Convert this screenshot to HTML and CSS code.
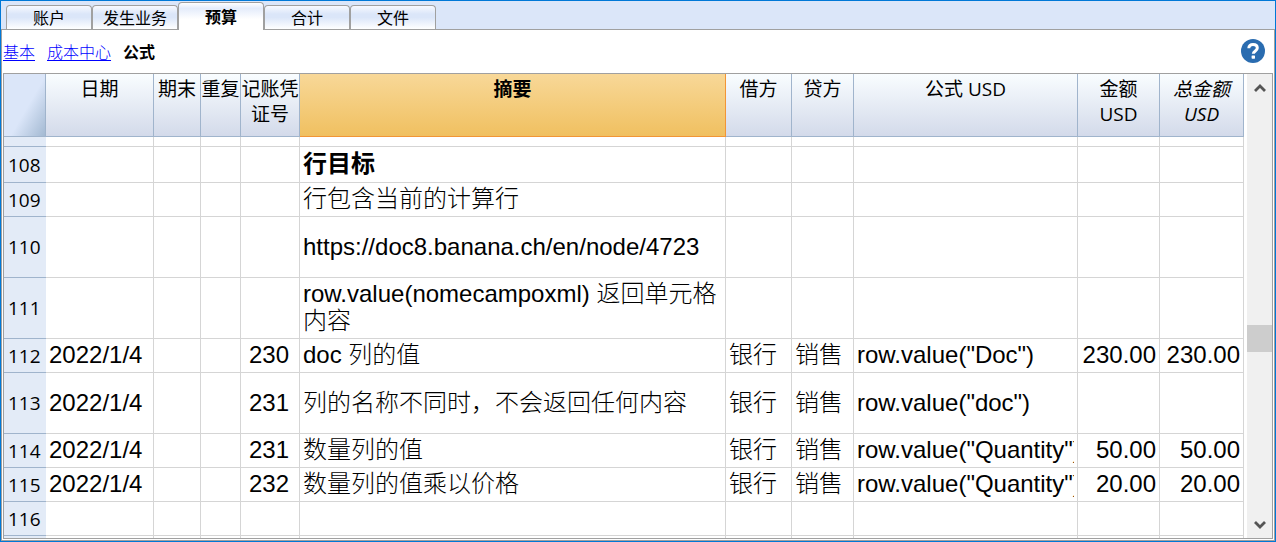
FILE: index.html
```html
<!DOCTYPE html>
<html lang="zh-CN">
<head>
<meta charset="utf-8">
<title>预算</title>
<link rel="stylesheet" href="styles.css">
</head>
<body>
<div class="window">
  <nav class="tabs">
    <button class="tab" type="button">账户</button>
    <button class="tab" type="button">发生业务</button>
    <button class="tab active" type="button">预算</button>
    <button class="tab" type="button">合计</button>
    <button class="tab" type="button">文件</button>
  </nav>
  <div class="panel">
    <div class="views">
      <a href="#base">基本</a>
      <a href="#cost">成本中心</a>
      <span class="current">公式</span>
      <button class="help" type="button" aria-label="帮助">
        <svg width="24" height="24" viewBox="0 0 24 24"><circle cx="12" cy="12" r="12" fill="#2a6cb0"/><path d="M7.800 9.200C7.800 6.800 9.500 5.600 12 5.600s4.300 1.300 4.300 3.500c0 2.900-4 2.700-4 5.700" fill="none" stroke="#fff" stroke-width="3"/><rect x="10.600" y="16.500" width="3.400" height="3.200" rx=".6" fill="#fff"/></svg>
      </button>
    </div>
    <div class="sheet">
      <div class="grid">
        <table>
          <colgroup>
            <col class="w-num"><col class="w-date"><col class="w-end"><col class="w-rep"><col class="w-doc"><col><col class="w-debit"><col class="w-credit"><col class="w-formula"><col class="w-amount"><col class="w-total">
          </colgroup>
          <thead>
            <tr><th class="corner"></th><th>日期</th><th>期末</th><th>重复</th><th>记账凭证号</th><th class="selected">摘要</th><th>借方</th><th>贷方</th><th>公式 USD</th><th>金额<br>USD</th><th class="italic">总金额<br>USD</th></tr>
          </thead>
          <tbody>
            <tr class="partial"><th></th><td></td><td></td><td></td><td></td><td></td><td></td><td></td><td></td><td></td><td></td></tr>
            <tr class="title"><th>108</th><td></td><td></td><td></td><td></td><td>行目标</td><td></td><td></td><td></td><td></td><td></td></tr>
            <tr><th>109</th><td></td><td></td><td></td><td></td><td>行包含当前的计算行</td><td></td><td></td><td></td><td></td><td></td></tr>
            <tr class="tall"><th>110</th><td></td><td></td><td></td><td></td><td>https://doc8.banana.ch/en/node/4723</td><td></td><td></td><td></td><td></td><td></td></tr>
            <tr class="tall"><th>111</th><td></td><td></td><td></td><td></td><td>row.value(nomecampoxml) 返回单元格内容</td><td></td><td></td><td></td><td></td><td></td></tr>
            <tr><th>112</th><td>2022/1/4</td><td></td><td></td><td class="doc">230</td><td>doc 列的值</td><td>银行</td><td>销售</td><td><div class="formula">row.value("Doc")</div></td><td class="num">230.00</td><td class="num">230.00</td></tr>
            <tr class="tall"><th>113</th><td>2022/1/4</td><td></td><td></td><td class="doc">231</td><td>列的名称不同时，不会返回任何内容</td><td>银行</td><td>销售</td><td><div class="formula">row.value("doc")</div></td><td></td><td></td></tr>
            <tr><th>114</th><td>2022/1/4</td><td></td><td></td><td class="doc">231</td><td>数量列的值</td><td>银行</td><td>销售</td><td><div class="formula">row.value("Quantity")</div></td><td class="num">50.00</td><td class="num">50.00</td></tr>
            <tr><th>115</th><td>2022/1/4</td><td></td><td></td><td class="doc">232</td><td>数量列的值乘以价格</td><td>银行</td><td>销售</td><td><div class="formula">row.value("Quantity")</div></td><td class="num">20.00</td><td class="num">20.00</td></tr>
            <tr><th>116</th><td></td><td></td><td></td><td></td><td></td><td></td><td></td><td></td><td></td><td></td></tr>
            <tr><th></th><td></td><td></td><td></td><td></td><td></td><td></td><td></td><td></td><td></td><td></td></tr>
          </tbody>
        </table>
      </div>
      <div class="scrollbar">
        <button type="button" aria-label="向上滚动"><svg width="12" height="10" viewBox="0 0 12 10"><path d="M1 8l5-5 5 5" fill="none" stroke="#555" stroke-width="2.800"/></svg></button>
        <div class="track"><div class="thumb"></div></div>
        <button type="button" aria-label="向下滚动"><svg width="12" height="10" viewBox="0 0 12 10"><path d="M1 2l5 5 5-5" fill="none" stroke="#555" stroke-width="2.800"/></svg></button>
      </div>
    </div>
  </div>
</div>
</body>
</html>
```
FILE: styles.css
```css
* { box-sizing: border-box; }
body {
  margin: 0;
  color: #000;
  font: 16px/20px "Noto Sans CJK SC", sans-serif;
}
button { font: inherit; color: inherit; border: 0; padding: 0; background: none; }
svg { display: block; }

.window {
  display: flex;
  flex-direction: column;
  height: 100vh;
  border: 1px solid #0078d7;
  background: #dbe6f9;
}
.tabs {
  display: flex;
  align-items: flex-end;
  flex: none;
  height: 28px;
  padding-left: 5px;
}
.tab {
  width: 86px;
  height: 24px;
  padding-bottom: 2px;
  border: 1px solid #a0a0a0;
  border-bottom: 0;
  border-radius: 4px 4px 0 0;
  background: linear-gradient(#f8faff, #dbe6f9 35%, #dbe6f9 50%, #fff);
}
.tab.active {
  position: relative;
  height: 28px;
  margin-bottom: -1px;
  font-weight: 700;
  background: linear-gradient(#fff, #e4ecfb 20%, #fff 60%);
}
.panel {
  flex: 1;
  min-height: 0;
  display: flex;
  flex-direction: column;
  padding: 0 1px 1px;
  border: 1px solid #a0a0a0;
  background: #fff;
}

.views {
  display: flex;
  align-items: center;
  gap: 12px;
  flex: none;
  height: 43px;
  padding-bottom: 2px;
}
.views a { color: #00f; font-weight: 300; text-underline-offset: 2px; }
.current { font-weight: 700; }
.help { margin-left: auto; margin-right: 8px; }

.sheet {
  flex: 1;
  min-height: 0;
  display: flex;
  border: 1px solid #a0a0a0;
}
.grid { flex: 1; min-width: 0; overflow: hidden; }
table {
  width: 100%;
  table-layout: fixed;
  border-collapse: separate;
  border-spacing: 0;
}
.w-num { width: 42px; }
.w-date { width: 108px; }
.w-end { width: 47px; }
.w-rep { width: 40px; }
.w-doc { width: 59px; }
.w-debit { width: 66px; }
.w-credit { width: 62px; }
.w-formula { width: 224px; }
.w-amount { width: 82px; }
.w-total { width: 84px; }

thead th {
  height: 63px;
  padding: 3px 0 0;
  vertical-align: top;
  font: 400 19px/25px "Open Sans", "Noto Sans CJK SC", sans-serif;
  border-right: 1px solid #a0b4cc;
  border-bottom: 1px solid #a0b4cc;
  background: linear-gradient(#f9fdff, #d3daea);
}
thead .corner { background: linear-gradient(120deg, #dbe6f9 55%, #a3b9d2); }
thead .selected {
  font-weight: 700;
  border-color: #f29536;
  background: linear-gradient(#f8d898, #f0c060);
}
thead .italic { font-style: italic; }

tbody tr { height: 34px; }
tbody .title { height: 36px; }
tbody .tall { height: 61px; }
tbody .partial { height: 10px; }
tbody th {
  padding: 1px 4px 0;
  font: 400 19px/25px "Open Sans", sans-serif;
  text-align: left;
  border-bottom: 1px solid #a0b4cc;
  background: #e3ebf7;
}
tbody td {
  padding: 0 3px 2px;
  font: 300 24px/27px "Liberation Sans", "Noto Sans CJK SC", sans-serif;
  border-right: 1px solid #d5d5d5;
  border-bottom: 1px solid #d5d5d5;
}
tbody .title td { font-weight: 700; }
tbody .partial th, tbody .partial td { padding: 0; }
tbody .doc { text-align: right; padding-right: 10px; }
tbody .num { text-align: right; }
.formula { overflow: hidden; white-space: nowrap; }

.scrollbar {
  display: flex;
  flex-direction: column;
  flex: none;
  width: 25px;
  margin-left: 3px;
  background: #f0f0f0;
}
.scrollbar button { display: grid; place-items: center; height: 27px; }
.track { flex: 1; display: flex; flex-direction: column; }
.track::before { content: ""; flex: 224; }
.track::after { content: ""; flex: 159; }
.thumb { height: 27px; background: #cdcdcd; }
```
